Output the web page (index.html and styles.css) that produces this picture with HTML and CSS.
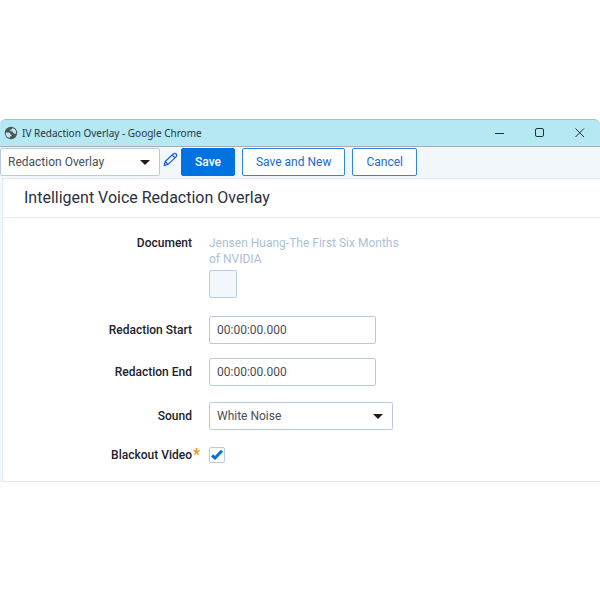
FILE: index.html
```html
<!DOCTYPE html>
<html lang="en">
<head>
    <meta charset="UTF-8">
    <meta name="viewport" content="width=device-width, initial-scale=1.0">
    <title>IV Redaction Overlay</title>
    <link rel="stylesheet" href="styles.css">
</head>
<body>
    <div class="window">
        <!-- Title bar -->
        <header class="titlebar">
            <svg class="globe" viewBox="0 0 14 14" width="14" height="14" aria-hidden="true">
                <circle cx="7" cy="7" r="6.2" fill="#4d5558"/>
                <path d="M1.900 6.400L4.600 6.400Q6.400 6.600 6.600 8.400L7.600 9L7.400 10.200L6 10.400L5.800 12A5.200 5.200 0 0 1 1.900 6.400Z" fill="#b5e8f3"/>
                <path d="M8.200 1.900L8 3.200L6.200 3.700L6.400 5.200L8.800 5.500L9.400 7.300L11 8L12.200 7.200A5.300 5.300 0 0 0 8.200 1.900Z" fill="#b5e8f3"/>
            </svg>
            <span class="titlebar-text">IV Redaction Overlay - Google Chrome</span>
            <div class="window-controls">
                <button type="button" aria-label="Minimize">
                    <svg viewBox="0 0 10 10" width="10" height="10"><path d="M0 5.500H9"/></svg>
                </button>
                <button type="button" aria-label="Maximize">
                    <svg viewBox="0 0 10 10" width="10" height="10"><rect x="0.500" y="0.500" width="8" height="8" rx="1.500"/></svg>
                </button>
                <button type="button" aria-label="Close">
                    <svg viewBox="0 0 10 10" width="10" height="10"><path d="M0.500 0.500L9 9M9 0.500L0.500 9"/></svg>
                </button>
            </div>
        </header>

        <form class="page">
            <!-- Layout picker and actions -->
            <div class="toolbar">
                <div class="select layout-select">
                    <select aria-label="Layout">
                        <option>Redaction Overlay</option>
                    </select>
                </div>
                <button type="button" class="edit" aria-label="Edit layout">
                    <svg viewBox="0 0 15 15" width="15" height="15">
                        <path d="M1.200 13.400L2.200 9.500L10.200 2Q11.800 0.700 13.200 2Q14.400 3.500 13 4.900L5 12.400ZM2.200 9.500L5 12.400M9.200 3L12 5.800"/>
                    </svg>
                </button>
                <button type="submit" class="btn primary">Save</button>
                <button type="button" class="btn">Save and New</button>
                <button type="button" class="btn">Cancel</button>
            </div>

            <section class="card">
                <h1>Intelligent Voice Redaction Overlay</h1>
                <div class="fields">
                    <div class="row document">
                        <span class="label">Document</span>
                        <div class="value">
                            <p>Jensen Huang-The First Six Months of NVIDIA</p>
                            <button type="button" class="picker" aria-label="Select document" disabled></button>
                        </div>
                    </div>
                    <div class="row">
                        <label class="label" for="start">Redaction Start</label>
                        <input type="text" id="start" value="00:00:00.000">
                    </div>
                    <div class="row">
                        <label class="label" for="end">Redaction End</label>
                        <input type="text" id="end" value="00:00:00.000">
                    </div>
                    <div class="row sound">
                        <label class="label" for="sound">Sound</label>
                        <div class="select">
                            <select id="sound">
                                <option>White Noise</option>
                            </select>
                        </div>
                    </div>
                    <div class="row">
                        <label class="label required" for="blackout">Blackout Video</label>
                        <div class="checkbox">
                            <input type="checkbox" id="blackout" checked>
                            <svg viewBox="0 0 16 16" width="16" height="16"><path d="M3 8.500L6 11L13 3.800"/></svg>
                        </div>
                    </div>
                </div>
            </section>
        </form>
    </div>
</body>
</html>
```

FILE: styles.css
```css
* {
    box-sizing: border-box;
}

body {
    margin: 0;
    padding-top: 1px;
    min-height: 100vh;
    display: flex;
    align-items: center;
    background-color: #fff;
    color: #2c3040;
    font-family: Roboto, Arial, sans-serif;
    font-size: 12px;
    line-height: 16px;
}

button,
input,
select {
    font: inherit;
    color: inherit;
    margin: 0;
}

.window {
    width: 100%;
}

/* Title bar */
.titlebar {
    display: flex;
    align-items: center;
    height: 28px;
    padding-left: 4px;
    background-color: #b5e8f3;
    border-top: 1px solid #a9bfc4;
    border-bottom: 1px solid #a9adb0;
    border-radius: 6px 6px 0 0;
}

.titlebar-text {
    margin-left: 4px;
    color: #23383e;
    font-family: "Noto Sans", "Open Sans", sans-serif;
    font-size: 10px;
}

.window-controls {
    display: flex;
    margin-left: auto;
}

.window-controls button {
    display: flex;
    align-items: center;
    justify-content: center;
    width: 40px;
    height: 26px;
    padding: 0;
    border: none;
    background: none;
}

.window-controls svg {
    fill: none;
    stroke: #1f3338;
}

/* Toolbar */
.page {
    background-color: #f2f7fb;
}

.toolbar {
    display: flex;
    align-items: center;
    height: 31px;
    padding-bottom: 1px;
}

.btn {
    height: 28px;
    margin-right: 7px;
    padding: 0 13px;
    border: 1px solid #2f86e0;
    border-radius: 2px;
    background-color: #fff;
    color: #2468d8;
    cursor: pointer;
}

.btn.primary {
    border-color: #0073e1;
    background-color: #0073e1;
    color: #fff;
    font-weight: 500;
}

.edit {
    width: 21px;
    height: 28px;
    padding: 0 0 6px 3px;
    border: none;
    background: none;
    cursor: pointer;
}

.edit svg {
    display: block;
    fill: none;
    stroke: #1f5fdc;
    stroke-width: 1.3;
    stroke-linejoin: round;
}

/* Drop-downs */
.select {
    position: relative;
    width: 184px;
}

.layout-select {
    width: 160px;
}

.select select {
    display: block;
    width: 100%;
    height: 28px;
    padding: 0 24px 0 7px;
    appearance: none;
    border: 1px solid #b9cbe0;
    border-radius: 2px;
    background-color: #fff;
    color: #4a4d55;
}

.select::after {
    content: "";
    position: absolute;
    top: 12px;
    right: 10px;
    border: 5px solid transparent;
    border-top-color: #1c1c1c;
    border-bottom: none;
    pointer-events: none;
}

/* Card */
.card {
    margin-left: 2px;
    background-color: #fff;
    border-top: 1px solid #e3e9f0;
    border-bottom: 1px solid #e3e6ea;
    border-left: 1px solid #e3e9f0;
    border-radius: 3px 0 0 3px;
}

.card h1 {
    margin: 0;
    padding: 9px 21px;
    border-bottom: 1px solid #e8ebee;
    font-size: 16px;
    font-weight: 400;
    line-height: 20px;
}

.fields {
    display: flex;
    flex-direction: column;
    gap: 14px;
    padding: 17px 0 18px;
}

.row {
    display: grid;
    grid-template-columns: 189px 1fr;
    column-gap: 17px;
    align-items: center;
}

.label {
    position: relative;
    text-align: right;
    font-weight: 500;
    color: #20222e;
}

.label.required::after {
    content: "*";
    position: absolute;
    left: 100%;
    padding-left: 1px;
    color: #f78b1f;
    font-size: 16px;
}

.row.document {
    align-items: start;
    margin-bottom: 4px;
}

.value {
    width: 200px;
    color: #abbfd8;
}

.value p {
    margin: 0 0 3px;
}

.picker {
    display: block;
    width: 28px;
    height: 28px;
    border: 1px solid #b9cbe0;
    border-radius: 2px;
    background-color: #f2f7fb;
}

.row input[type="text"] {
    width: 167px;
    height: 28px;
    padding: 0 7px;
    border: 1px solid #b9cbe0;
    border-radius: 2px;
    color: #4a4d55;
}

.row.sound {
    margin: 2px 0 3px;
}

.checkbox {
    position: relative;
    width: 16px;
    height: 16px;
}

.checkbox input {
    display: block;
    width: 16px;
    height: 16px;
    appearance: none;
    border: 1px solid #b9cbe0;
    border-radius: 2px;
}

.checkbox svg {
    position: absolute;
    top: 0;
    left: 0;
    fill: none;
    stroke: #0073e1;
    stroke-width: 3;
    pointer-events: none;
    visibility: hidden;
}

.checkbox input:checked + svg {
    visibility: visible;
}
```
